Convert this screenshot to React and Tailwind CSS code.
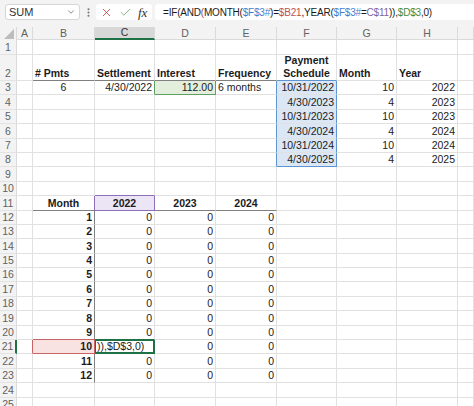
import { ChevronDown, EllipsisVertical, X, Check } from "lucide-react";

const COLS = [
  { k: "A", w: "w-[16px]" },
  { k: "B", w: "w-[62px]" },
  { k: "C", w: "w-[60px]" },
  { k: "D", w: "w-[61px]" },
  { k: "E", w: "w-[61px]" },
  { k: "F", w: "w-[60px]" },
  { k: "G", w: "w-[60px]" },
  { k: "H", w: "w-[61px]" },
  { k: "I", w: "flex-1" },
];
const LETTERS = COLS.map((c) => c.k);

const ROWS = [
  { n: 1, h: "h-[14.5px]" },
  { n: 2, h: "h-[26.5px]" },
  ...Array.from({ length: 23 }, (_, i) => ({ n: i + 3, h: "h-[14.4px]" })),
];

// highlighted ranges from the formula being edited
const RANGES = [
  { c1: "D", c2: "D", r1: 3, r2: 3, k: "green" },
  { c1: "F", c2: "F", r1: 3, r2: 8, k: "blue" },
  { c1: "C", c2: "C", r1: 11, r2: 11, k: "purple" },
  { c1: "B", c2: "B", r1: 21, r2: 21, k: "red" },
];

const FILL = {
  green: "bg-[#e3efdc]",
  blue: "bg-[#dbe7f5]",
  purple: "bg-[#ece5f5]",
  red: "bg-[#f9e2e2]",
};
const R_CLS = {
  grid: "border-r-[#e1e1e1]",
  dark: "border-r-[#808080]",
  green: "border-r-[#5e9f66]",
  blue: "border-r-[#5d95d0]",
  purple: "border-r-[#8c6fb8]",
  red: "border-r-[#c86464]",
  active: "border-r-[#1e7145]",
};
const B_CLS = {
  grid: "border-b-[#e1e1e1]",
  dark: "border-b-[#808080]",
  green: "border-b-[#5e9f66]",
  blue: "border-b-[#5d95d0]",
  purple: "border-b-[#8c6fb8]",
  red: "border-b-[#c86464]",
  active: "border-b-[#1e7145]",
};

const inRange = (col, row, rg) => {
  const i = LETTERS.indexOf(col);
  return (
    i >= LETTERS.indexOf(rg.c1) &&
    i <= LETTERS.indexOf(rg.c2) &&
    row >= rg.r1 &&
    row <= rg.r2
  );
};

const isActive = (col, row) => col === "C" && row === 21;

function rightColor(col, row) {
  if (isActive(col, row)) return "active";
  for (const rg of RANGES) if (inRange(col, row, rg) && col === rg.c2) return rg.k;
  const next = LETTERS[LETTERS.indexOf(col) + 1];
  if (next && isActive(next, row)) return "active";
  for (const rg of RANGES) if (next && inRange(next, row, rg) && next === rg.c1) return rg.k;
  if (col === "B" && row >= 12 && row <= 23) return "dark";
  return "grid";
}

function bottomColor(col, row) {
  if (isActive(col, row) || isActive(col, row + 1)) return "active";
  for (const rg of RANGES) if (inRange(col, row, rg) && row === rg.r2) return rg.k;
  if (["B", "C", "D", "E"].includes(col) && (row === 2 || row === 11)) return "dark";
  for (const rg of RANGES) if (inRange(col, row + 1, rg) && row + 1 === rg.r1) return rg.k;
  return "grid";
}

function fillOf(col, row) {
  for (const rg of RANGES) if (inRange(col, row, rg)) return FILL[rg.k];
  return "bg-white";
}

// cell contents
const cells = {};
const put = (ref, t, o = {}) => (cells[ref] = { t, a: "r", ...o });

put("B2", "# Pmts", { b: 1, a: "l" });
put("C2", "Settlement", { b: 1, a: "l" });
put("D2", "Interest", { b: 1, a: "l" });
put("E2", "Frequency", { b: 1, a: "l" });
put("F2", "Payment Schedule", { b: 1, a: "c", wrap: 1 });
put("G2", "Month", { b: 1, a: "l" });
put("H2", "Year", { b: 1, a: "l" });
put("B3", "6", { a: "c" });
put("C3", "4/30/2022");
put("D3", "112.00");
put("E3", "6 months", { a: "l" });

const schedule = [
  ["10/31/2022", "10", "2022"],
  ["4/30/2023", "4", "2023"],
  ["10/31/2023", "10", "2023"],
  ["4/30/2024", "4", "2024"],
  ["10/31/2024", "10", "2024"],
  ["4/30/2025", "4", "2025"],
];
schedule.forEach(([d, m, y], i) => {
  put(`F${i + 3}`, d);
  put(`G${i + 3}`, m);
  put(`H${i + 3}`, y);
});

put("B11", "Month", { b: 1, a: "c" });
put("C11", "2022", { b: 1, a: "c" });
put("D11", "2023", { b: 1, a: "c" });
put("E11", "2024", { b: 1, a: "c" });
for (let m = 1; m <= 12; m++) {
  const r = m + 11;
  put(`B${r}`, String(m), { b: 1 });
  put(`C${r}`, "0");
  put(`D${r}`, "0");
  put(`E${r}`, "0");
}
put("C21", ")),$D$3,0)", { a: "l" });

const ALIGN = { l: "justify-start", r: "justify-end", c: "justify-center" };

const FORMULA = [
  ["=IF(AND", "text-[#1b1b1b]"],
  ["(", "text-[#b0413e]"],
  ["MONTH(", "text-[#1b1b1b]"],
  ["$F$3#", "text-[#3f7fcf]"],
  [")=", "text-[#1b1b1b]"],
  ["$B21", "text-[#c0504d]"],
  [",YEAR(", "text-[#1b1b1b]"],
  ["$F$3#", "text-[#3f7fcf]"],
  ["=", "text-[#1b1b1b]"],
  ["C$11", "text-[#8064a2]"],
  [")),", "text-[#1b1b1b]"],
  ["$D$3", "text-[#3a8d47]"],
  [",0)", "text-[#1b1b1b]"],
];

function Cell({ col, row }) {
  const c = cells[`${col.k}${row.n}`];
  const active = isActive(col.k, row.n);
  return (
    <div
      className={`${col.w} ${row.h} shrink-0 flex items-end px-[2px] border-r border-b ${
        R_CLS[rightColor(col.k, row.n)]
      } ${B_CLS[bottomColor(col.k, row.n)]} ${fillOf(col.k, row.n)} ${
        c ? ALIGN[c.a] : ""
      } ${active ? "shadow-[inset_1px_1px_0_#1e7145,inset_-1px_-1px_0_#1e7145]" : ""}`}
    >
      {c &&
        (c.wrap ? (
          <span className="w-full text-center leading-[13px] font-bold whitespace-normal">
            Payment
            <br />
            Schedule
          </span>
        ) : (
          <span className={`leading-[13px] whitespace-nowrap ${c.b ? "font-bold" : ""}`}>
            {c.t}
          </span>
        ))}
    </div>
  );
}

export default function App() {
  return (
    <div className="w-[474px] h-[406px] overflow-hidden bg-white font-['Liberation_Sans',Arial,sans-serif] text-[10.5px] text-[#1b1b1b]">
      {/* FORMULA BAR */}
      <div className="h-[27px] bg-[#f3f3f3] flex items-start pt-[4px]">
        <div className="ml-[5px] w-[75px] h-[16px] bg-white border border-[#d6d6d6] rounded-[3px] flex items-center justify-between px-[3px]">
          <span className="text-[11px] text-[#333] leading-none">SUM</span>
          <ChevronDown size={10} strokeWidth={1.6} className="text-[#555]" />
        </div>
        <div className="w-[16px] h-[16px] flex items-center justify-center">
          <EllipsisVertical size={11} strokeWidth={2.5} className="text-[#777]" />
        </div>
        <div className="w-[56px] h-[16px] bg-white rounded-[3px] flex items-center gap-[6px] px-[4px]">
          <X size={13} strokeWidth={1.5} className="text-[#d13438]" />
          <Check size={13} strokeWidth={1.5} className="text-[#6aaa64]" />
          <span className="font-['Liberation_Serif',serif] italic text-[13px] leading-none text-[#333]">
            fx
          </span>
        </div>
        <div className="ml-[3px] flex-1 h-[16px] bg-white rounded-l-[3px] flex items-center pl-[8px] text-[10px] tracking-[-0.2px] whitespace-nowrap">
          {FORMULA.map(([t, cls], i) => (
            <span key={i} className={cls}>
              {t}
            </span>
          ))}
        </div>
      </div>

      {/* COLUMN HEADERS */}
      <div className="flex h-[13px] bg-[#f3f3f3]">
        <div className="w-[17px] shrink-0 flex items-end justify-end pr-[2px] pb-[1px] border-r border-[#dadada]">
          <svg width="10" height="10" viewBox="0 0 10 10">
            <polygon points="10,0 10,10 0,10" fill="#bdbdbd" />
          </svg>
        </div>
        {COLS.map((col) => (
          <div
            key={col.k}
            className={`${col.w} shrink-0 flex items-center justify-center text-[10.5px] leading-none border-r border-[#dadada] ${
              col.k === "C"
                ? "bg-[#d8d8d8] border-b-2 border-b-[#1e7145] text-[#333]"
                : "border-b border-b-[#dadada] text-[#616161]"
            }`}
          >
            {col.k === "I" ? "" : col.k}
          </div>
        ))}
      </div>

      {/* GRID */}
      {ROWS.map((row) => (
        <div key={row.n} className="flex">
          <div
            className={`w-[17px] ${row.h} shrink-0 bg-[#f3f3f3] flex items-end justify-center text-[10.5px] leading-[13px] text-[#616161] border-b border-b-[#e3e3e3] ${
              row.n === 21 ? "border-r-2 border-r-[#1e7145]" : "border-r border-r-[#dadada]"
            }`}
          >
            {row.n}
          </div>
          {COLS.map((col) => (
            <Cell key={col.k} col={col} row={row} />
          ))}
        </div>
      ))}
    </div>
  );
}
